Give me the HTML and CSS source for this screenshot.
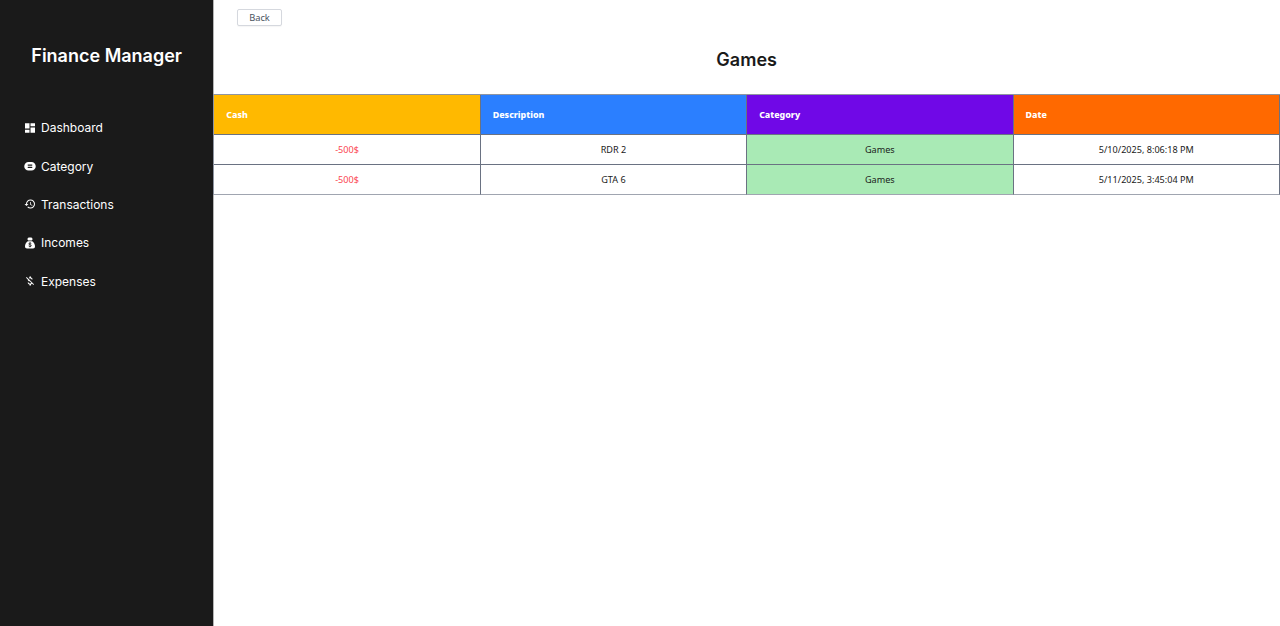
FILE: index.html
```
<!DOCTYPE html>
<html lang="en">
<head>
<meta charset="utf-8">
<title>Finance Manager</title>
<link rel="stylesheet" href="styles.css">
</head>
<body>
<div class="app">
  <aside class="sidebar">
    <h1 class="brand">Finance Manager</h1>
    <nav class="menu">
      <a class="menu-item"><svg class="icon" viewBox="0 0 24 24"><path d="M2 13h9V2.500H2V13zm0 8.500h9v-6H2v6zm11 0h9V11h-9v10.500zm0-19v6h9v-6h-9z"/></svg><span>Dashboard</span></a>
      <a class="menu-item"><svg class="icon" viewBox="0 0 24 24"><path fill-rule="evenodd" d="M9 4h6a8 8 0 0 1 0 17H9A8 8 0 0 1 9 4zM8 9a1.200 1.200 0 0 0 0 2.300h8A1.200 1.200 0 0 0 16 9zM8 13.500a1.200 1.200 0 0 0 0 2.300h8a1.200 1.200 0 0 0 0-2.300z"/></svg><span>Category</span></a>
      <a class="menu-item"><svg class="icon" viewBox="0 0 24 24"><path d="M13 3a9 9 0 0 0-9 9H1l3.890 3.890.07.140L9 12H6c0-3.870 3.130-7 7-7s7 3.130 7 7-3.130 7-7 7c-1.930 0-3.680-.79-4.940-2.060l-1.420 1.420A8.954 8.954 0 0 0 13 21a9 9 0 0 0 0-18zm-1 5v5l4.280 2.540.72-1.210-3.500-2.080V8H12z"/></svg><span>Transactions</span></a>
      <a class="menu-item"><svg class="icon" viewBox="0 0 24 24"><path d="M9 1h6l2.500 3-2 3h-7l-2-3zM7.500 8.500h9C20 11 22 15 22 18.500c0 3-1.500 4.500-4 4.500H6c-2.500 0-4-1.500-4-4.500 0-3.500 2-7.500 5.500-10z"/><path class="cutout" d="M14.600 13.200c-.6-.8-1.500-1-2.600-1-1.500 0-2.500.6-2.500 1.600 0 2.400 5.200 1.200 5.200 3.500 0 1.200-1.200 1.800-2.700 1.800-1.200 0-2.200-.4-2.800-1.200M12 10.500v10"/></svg><span>Incomes</span></a>
      <a class="menu-item"><svg class="icon" viewBox="0 0 24 24"><path d="M12.500 6.900c1.780 0 2.440.85 2.500 2.100h2.210c-.07-1.720-1.120-3.300-3.210-3.810V3h-3v2.160c-.53.12-1.030.3-1.480.54l1.470 1.470c.41-.17.910-.27 1.510-.27zM5.330 4.060 4.060 5.330 7.500 8.770c0 2.080 1.560 3.210 3.910 3.910l3.510 3.510c-.34.48-1.050.910-2.420.910-2.060 0-2.870-.92-2.980-2.100h-2.200c.12 2.190 1.760 3.420 3.680 3.830V21h3v-2.150c.96-.18 1.820-.55 2.450-1.120l2.220 2.220 1.270-1.270L5.330 4.060z"/></svg><span>Expenses</span></a>
    </nav>
  </aside>
  <main class="content">
    <button class="back">Back</button>
    <h2 class="title">Games</h2>
    <div class="table">
      <div class="head cash">Cash</div>
      <div class="head description">Description</div>
      <div class="head category">Category</div>
      <div class="head date">Date</div>
      <div class="cell amount">-500$</div>
      <div class="cell">RDR 2</div>
      <div class="cell tag">Games</div>
      <div class="cell">5/10/2025, 8:06:18 PM</div>
      <div class="cell amount">-500$</div>
      <div class="cell">GTA 6</div>
      <div class="cell tag">Games</div>
      <div class="cell">5/11/2025, 3:45:04 PM</div>
    </div>
  </main>
</div>
</body>
</html>
```
FILE: styles.css
```
* { box-sizing: border-box; }
body { margin: 0; background: #fff; color: #1a1a1a; font-family: Inter, sans-serif; }
.app { display: flex; height: 626px; overflow: hidden; }
.sidebar { width: 213.3px; flex: none; background: #1a1a1a; color: #fff; padding-top: 42px; }
.brand { margin: 0; text-align: center; font-size: 18px; line-height: 27px; font-weight: 600; }
.menu { display: flex; flex-direction: column; padding: 39.7px 0 0 24px; }
.menu-item { display: flex; align-items: center; gap: 5px; height: 38.3px; font-size: 12px; font-weight: 400; }
.icon { width: 12px; height: 12px; flex: none; fill: #fff; }
.cutout { fill: none; stroke: #1a1a1a; stroke-width: 1.6; }
.content { flex: 1; min-width: 0; display: flex; flex-direction: column; box-shadow: inset 1px 0 #b4b4b4; }
.back { width: 45px; height: 17px; margin: 9px 0 0 23.700px; padding: 0; border: 1px solid #d5d8de; border-radius: 2px; background: #fff; color: #4a5260; font: 9.3px/14px "Noto Sans", sans-serif; box-shadow: 0 1px 1px rgba(0, 0, 0, .04); }
.title { margin: 21px 0; text-align: center; font-size: 18px; line-height: 26px; font-weight: 600; }
.table { display: grid; grid-template-columns: repeat(4, 1fr); grid-template-rows: 40px 30px 30px; margin-top: 0; border: solid #8f95a1; border-width: 1px 0 0 1px; font: 9.1px/14px "Noto Sans", sans-serif; }
.head, .cell { display: flex; align-items: center; border: solid #6a7282; border-width: 0 1px 1px 0; }
.head { padding-left: 12px; color: #fff; font-weight: 800; font-size: 8.9px; }
.cell { justify-content: center; }
.cell:nth-last-child(-n+4) { border-bottom-color: #a0a5b0; }
.cash { background: #ffb900; }
.description { background: #2b7fff; }
.category { background: #7008e7; }
.date { background: #ff6900; }
.amount { color: #fb4650; }
.tag { background: #a9eab5; }
```
